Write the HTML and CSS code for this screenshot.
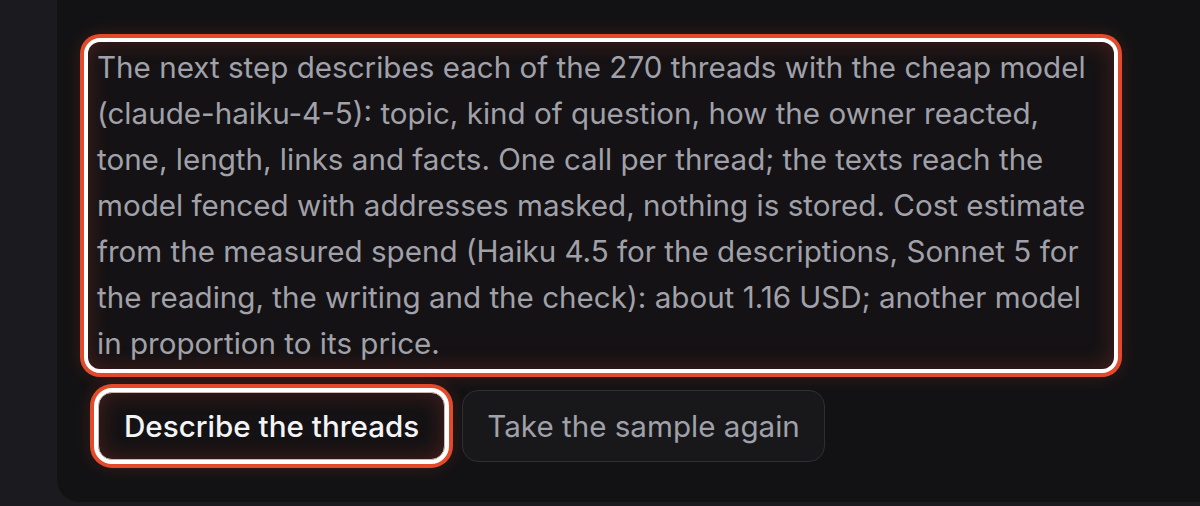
FILE: index.html
```html
<!DOCTYPE html>
<html lang="en">
<head>
<meta charset="UTF-8">
<meta name="viewport" content="width=device-width, initial-scale=1.0">
<title>Describe the threads</title>
<link rel="stylesheet" href="styles.css">
</head>
<body>
<div class="card">
    <p class="step-note hl">The next step describes each of the 270 threads with the cheap model (claude-haiku-4-5): topic, kind of question, how the owner reacted, tone, length, links and facts. One call per thread; the texts reach the model fenced with addresses masked, nothing is stored. Cost estimate from the measured spend (Haiku 4.5 for the descriptions, Sonnet 5 for the reading, the writing and the check): about 1.16 USD; another model in proportion to its price.</p>

    <div class="actions">
        <button class="btn btn-primary hl">Describe the threads</button>
        <button class="btn">Take the sample again</button>
    </div>
</div>
</body>
</html>
```

FILE: styles.css
```css
body {
    margin: 0;
    background-color: #1b1b1f;
    font-family: Inter, "Noto Sans", sans-serif;
    height: 506px;
    overflow: hidden;
}

.card {
    margin-left: 57px;
    padding: 42px 86px 40px 31px;
    background-color: #121214;
    border-bottom-left-radius: 22px;
}

.step-note {
    margin: 0;
    padding: 2px 9px 3px;
    font-size: 29.6px;
    line-height: 46px;
    color: #a1a1aa;
    border-radius: 12px;
    background-color: #141214;
}

.hl {
    box-shadow: 0 0 0 4px #fff, 0 0 0 8px #e34a2b, 0 0 18px 8px rgba(227, 74, 43, 0.18), inset 0 0 22px rgba(210, 70, 50, 0.28);
}

.actions {
    display: flex;
    align-items: center;
    gap: 17px;
    margin-top: 21px;
    padding-left: 10px;
}

.btn {
    height: 72px;
    padding: 0 24px;
    font-family: inherit;
    font-size: 29.6px;
    color: #a1a1aa;
    background-color: #18181b;
    border: 1px solid #2e2e33;
    border-radius: 16px;
    cursor: pointer;
}

.btn-primary {
    height: 68px;
    padding: 0 25px;
    color: #f4f4f5;
    font-weight: 500;
    background-color: #141214;
    border-color: #c9b8b4;
    border-radius: 14px;
}
```
